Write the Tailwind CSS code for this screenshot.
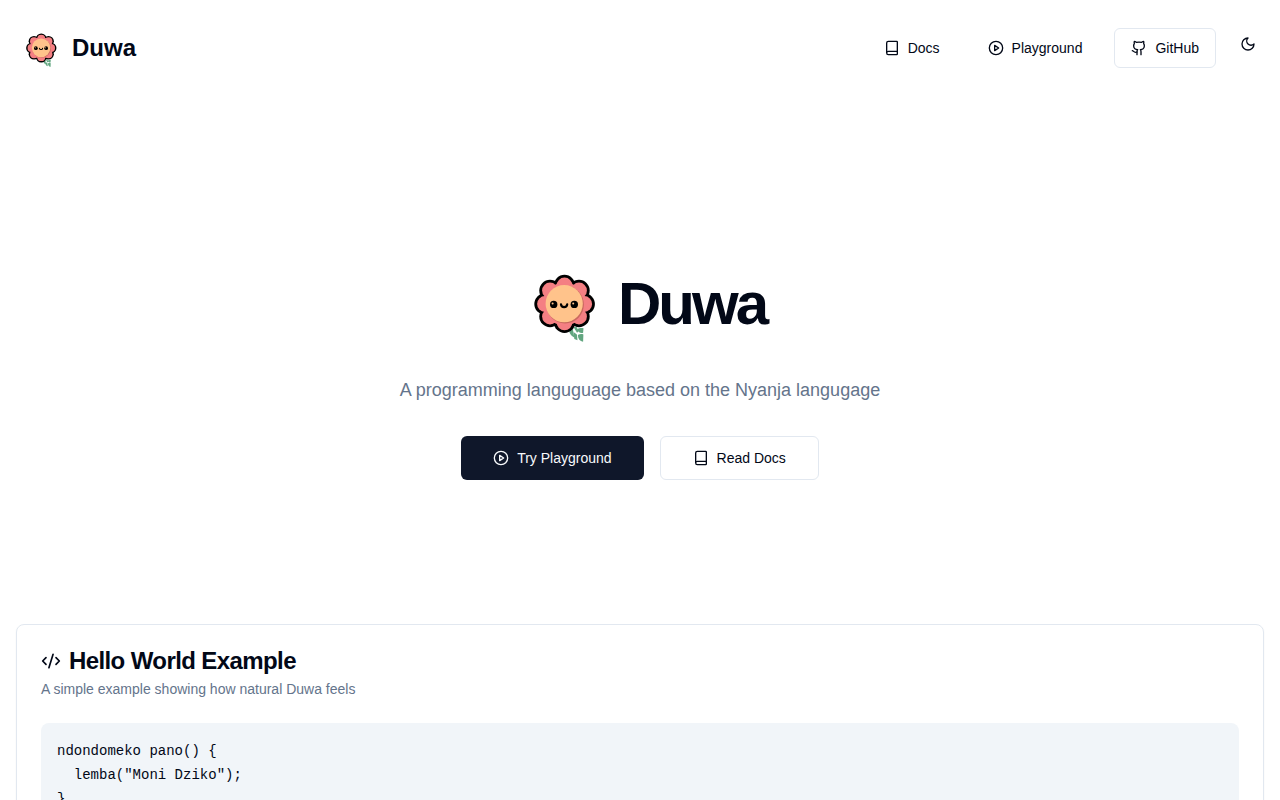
<!DOCTYPE html>
<html lang="en">
<head>
    <meta charset="UTF-8">
    <meta name="viewport" content="width=device-width, initial-scale=1.0">
    <title>Duwa</title>

    <!-- Tailwind CSS -->
    <script src="https://cdn.jsdelivr.net/npm/@tailwindcss/browser@4"></script>
</head>
<body class="min-h-screen bg-white font-['Liberation_Sans',Arial,sans-serif] text-[#020817]">

    <!-- Shared icons -->
    <svg class="hidden" aria-hidden="true">
        <symbol id="flower" viewBox="0 0 96 96">
            <!-- Leaf -->
            <g fill="#62a680">
                <path d="M54.500 71h4l1.800 10.500c-3.500-1.500-5.600-5-5.800-10.500z"/>
                <path d="M59.500 76l3.400 2.500.6 5.800-3.200-1.200z"/>
                <path d="M59.500 71h3.200l1.800 4.500-1.500 1.300z"/>
                <path d="M63 73.500c2-1.500 4.300-1.800 6.500-1.300l-.4 4.600c-2.400.6-4.400-.1-6.100-3.300z"/>
                <path d="M63.800 79c2-1.200 4-1.200 5.600-.6l-.3 7.400c-3.300-.6-5-2.800-5.300-6.800z"/>
            </g>
            <!-- Petals: outline first, fill on top -->
            <g fill="#000">
                <circle cx="50.500" cy="29.500" r="10.700"/>
                <circle cx="65" cy="34.500" r="10.700"/>
                <circle cx="70.200" cy="48" r="10.700"/>
                <circle cx="65" cy="60.500" r="10.700"/>
                <circle cx="50.500" cy="66.300" r="10.700"/>
                <circle cx="36" cy="60.500" r="10.700"/>
                <circle cx="31" cy="48" r="10.700"/>
                <circle cx="36" cy="34.500" r="10.700"/>
            </g>
            <g fill="#f47f83">
                <circle cx="50.500" cy="48" r="21.500"/>
                <circle cx="50.500" cy="29.500" r="7.900"/>
                <circle cx="65" cy="34.500" r="7.900"/>
                <circle cx="70.200" cy="48" r="7.900"/>
                <circle cx="65" cy="60.500" r="7.900"/>
                <circle cx="50.500" cy="66.300" r="7.900"/>
                <circle cx="36" cy="60.500" r="7.900"/>
                <circle cx="31" cy="48" r="7.900"/>
                <circle cx="36" cy="34.500" r="7.900"/>
            </g>
            <!-- Face -->
            <circle cx="51.100" cy="48.600" r="18.800" fill="#c9695f"/>
            <circle cx="50.200" cy="47.700" r="18.600" fill="#ffc38b"/>
            <circle cx="39.700" cy="48.400" r="3.700" fill="#000"/>
            <circle cx="60.300" cy="48.400" r="3.700" fill="#000"/>
            <circle cx="38.600" cy="47.400" r="1" fill="#ffc38b"/>
            <circle cx="59.200" cy="47.400" r="1" fill="#ffc38b"/>
            <path d="M47 48.400c.3 3.600 5.900 3.600 6.200 0" fill="none" stroke="#000" stroke-width="2.200" stroke-linecap="round"/>
        </symbol>
        <symbol id="book" viewBox="0 0 24 24">
            <path d="M4 19.500v-15A2.500 2.500 0 0 1 6.500 2H19a1 1 0 0 1 1 1v18a1 1 0 0 1-1 1H6.500a1 1 0 0 1 0-5H20"/>
        </symbol>
        <symbol id="play" viewBox="0 0 24 24">
            <circle cx="12" cy="12" r="10"/>
            <polygon points="10 8 16 12 10 16 10 8"/>
        </symbol>
        <symbol id="github" viewBox="0 0 24 24">
            <path d="M15 22v-4a4.800 4.800 0 0 0-1-3.500c3 0 6-2 6-5.500.08-1.250-.27-2.480-1-3.500.28-1.150.28-2.350 0-3.500 0 0-1 0-3 1.500-2.640-.5-5.360-.5-8 0C6 2 5 2 5 2c-.3 1.150-.3 2.350 0 3.500A5.403 5.403 0 0 0 4 9c0 3.500 3 5.500 6 5.500-.39.490-.68 1.050-.85 1.650-.17.600-.22 1.230-.15 1.850v4"/>
            <path d="M9 18c-4.510 2-5-2-7-2"/>
        </symbol>
        <symbol id="moon" viewBox="0 0 24 24">
            <path d="M12 3a6 6 0 0 0 9 9 9 9 0 1 1-9-9Z"/>
        </symbol>
        <symbol id="code" viewBox="0 0 24 24">
            <path d="m18 16 4-4-4-4"/>
            <path d="m6 8-4 4 4 4"/>
            <path d="m14.500 4-5 16"/>
        </symbol>
    </svg>

    <!-- Header -->
    <header class="flex items-center justify-between px-4 py-6">
        <a href="#" class="flex items-center gap-2 text-2xl font-bold">
            <svg class="size-12" aria-hidden="true"><use href="#flower"/></svg>
            Duwa
        </a>
        <nav class="flex items-start gap-4 text-sm">
            <a href="#docs" class="flex h-10 items-center gap-2 rounded-md px-4 hover:bg-slate-100">
                <svg class="size-4 fill-none stroke-current stroke-2" stroke-linecap="round" stroke-linejoin="round" aria-hidden="true"><use href="#book"/></svg>
                Docs
            </a>
            <a href="#playground" class="flex h-10 items-center gap-2 rounded-md px-4 hover:bg-slate-100">
                <svg class="size-4 fill-none stroke-current stroke-2" stroke-linecap="round" stroke-linejoin="round" aria-hidden="true"><use href="#play"/></svg>
                Playground
            </a>
            <a href="#github" class="flex h-10 items-center gap-2 rounded-md border border-[#e2e8f0] px-4 hover:bg-slate-100">
                <svg class="size-4 fill-none stroke-current stroke-2" stroke-linecap="round" stroke-linejoin="round" aria-hidden="true"><use href="#github"/></svg>
                GitHub
            </a>
            <button type="button" aria-label="Toggle theme" class="flex size-8 items-center justify-center rounded-md hover:bg-slate-100">
                <svg class="size-4 fill-none stroke-current stroke-2" stroke-linecap="round" stroke-linejoin="round" aria-hidden="true"><use href="#moon"/></svg>
            </button>
        </nav>
    </header>

    <main class="px-4 pb-16">
        <!-- Hero -->
        <section class="flex flex-col items-center pt-40 pb-36 text-center">
            <h1 class="flex items-center gap-2 text-6xl font-bold tracking-tighter">
                <svg class="size-24" aria-hidden="true"><use href="#flower"/></svg>
                Duwa
            </h1>
            <p class="mt-6 text-lg text-[#64748b]">A programming languguage based on the Nyanja langugage</p>
            <div class="mt-8 flex gap-4 text-sm">
                <a href="#playground" class="flex h-11 items-center gap-2 rounded-md bg-[#0f172a] px-8 text-[#f8fafc] hover:bg-[#0f172a]/90">
                    <svg class="size-4 fill-none stroke-current stroke-2" stroke-linecap="round" stroke-linejoin="round" aria-hidden="true"><use href="#play"/></svg>
                    Try Playground
                </a>
                <a href="#docs" class="flex h-11 items-center gap-2 rounded-md border border-[#e2e8f0] px-8 hover:bg-slate-100">
                    <svg class="size-4 fill-none stroke-current stroke-2" stroke-linecap="round" stroke-linejoin="round" aria-hidden="true"><use href="#book"/></svg>
                    Read Docs
                </a>
            </div>
        </section>

        <!-- Code example -->
        <section class="rounded-lg border border-[#e2e8f0] p-6 shadow-xs">
            <h2 class="flex items-center gap-2 text-2xl/6 font-bold tracking-tight">
                <svg class="size-5 fill-none stroke-current stroke-2" stroke-linecap="round" stroke-linejoin="round" aria-hidden="true"><use href="#code"/></svg>
                Hello World Example
            </h2>
            <p class="mt-1.5 text-sm text-[#64748b]">A simple example showing how natural Duwa feels</p>
            <pre class="mt-6 overflow-x-auto rounded-lg bg-[#f1f5f9] p-4 font-['Liberation_Mono',monospace] text-sm/6"><code>ndondomeko pano() {
  lemba("Moni Dziko");
}</code></pre>
        </section>
    </main>
</body>
</html>
